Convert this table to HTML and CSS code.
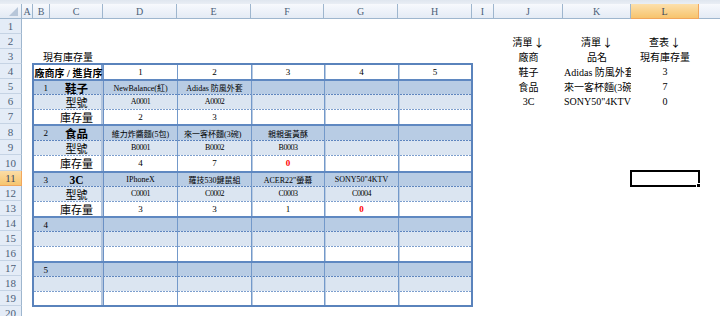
FILE: index.html
```html
<!DOCTYPE html>
<html lang="zh-Hant">
<head>
<meta charset="utf-8">
<title>現有庫存量</title>
<link rel="stylesheet" href="styles.css">
</head>
<body>
<div class="topstrip"></div>
<div class="sheet">
  <div class="corner"><svg width="9" height="9" viewBox="0 0 9 9"><polygon points="9,0 9,9 0,9" fill="#b7c6d9"/></svg></div>
  <div class="colheads">
    <div class="ch wa">A</div><div class="ch wb">B</div><div class="ch wc">C</div><div class="ch wd">D</div><div class="ch we">E</div><div class="ch wf">F</div><div class="ch wg">G</div><div class="ch wh">H</div><div class="ch wi">I</div><div class="ch wj">J</div><div class="ch wk">K</div><div class="ch wl sel">L</div><div class="ch wm"></div>
  </div>
  <div class="rowheads">
    <div class="rh">1</div><div class="rh">2</div><div class="rh">3</div><div class="rh">4</div><div class="rh">5</div><div class="rh">6</div><div class="rh">7</div><div class="rh tall">8</div><div class="rh">9</div><div class="rh tall">10</div><div class="rh sel">11</div><div class="rh">12</div><div class="rh">13</div><div class="rh">14</div><div class="rh">15</div><div class="rh">16</div><div class="rh">17</div><div class="rh">18</div><div class="rh">19</div><div class="rh">20</div>
  </div>
  <div class="body">
    <div class="title">現有庫存量</div>

    <div class="lookup">
      <div class="lk">清單<span class="arrow">↓</span></div><div class="lk">清單<span class="arrow">↓</span></div><div class="lk">查表<span class="arrow">↓</span></div>
      <div class="lk">廠商</div><div class="lk">品名</div><div class="lk">現有庫存量</div>
      <div class="lk">鞋子</div><div class="lk left">Adidas 防風外套</div><div class="lk">3</div>
      <div class="lk">食品</div><div class="lk left">來一客杯麵(3碗)</div><div class="lk">7</div>
      <div class="lk">3C</div><div class="lk left">SONY50"4KTV</div><div class="lk">0</div>
    </div>

    <div class="tbl">
      <div class="tr r4"><div class="bc">廠商序 / 進貨序</div><div class="x d num">1</div><div class="x e num">2</div><div class="x f num">3</div><div class="x g num">4</div><div class="x h num">5</div></div>

      <div class="tr g1"><div class="n">1</div><div class="lab strong">鞋子</div><div class="x d">NewBalance(紅)</div><div class="x e">Adidas 防風外套</div><div class="x f"></div><div class="x g"></div><div class="x h"></div></div>
      <div class="tr g2"><div class="n"></div><div class="lab">型號</div><div class="x d code">A0001</div><div class="x e code">A0002</div><div class="x f"></div><div class="x g"></div><div class="x h"></div></div>
      <div class="tr g3"><div class="n"></div><div class="lab">庫存量</div><div class="x d num">2</div><div class="x e num">3</div><div class="x f"></div><div class="x g"></div><div class="x h"></div></div>

      <div class="tr g1 tall"><div class="n">2</div><div class="lab strong">食品</div><div class="x d">維力炸醬麵(5包)</div><div class="x e clip">來一客杯麵(3碗)</div><div class="x f">親親蛋黃酥</div><div class="x g"></div><div class="x h"></div></div>
      <div class="tr g2"><div class="n"></div><div class="lab">型號</div><div class="x d code">B0001</div><div class="x e code">B0002</div><div class="x f code">B0003</div><div class="x g"></div><div class="x h"></div></div>
      <div class="tr g3 tall"><div class="n"></div><div class="lab">庫存量</div><div class="x d num">4</div><div class="x e num">7</div><div class="x f num zero">0</div><div class="x g"></div><div class="x h"></div></div>

      <div class="tr g1"><div class="n">3</div><div class="lab strong">3C</div><div class="x d">IPhoneX</div><div class="x e">羅技530鍵鼠組</div><div class="x f">ACER22"螢幕</div><div class="x g">SONY50"4KTV</div><div class="x h"></div></div>
      <div class="tr g2"><div class="n"></div><div class="lab">型號</div><div class="x d code">C0001</div><div class="x e code">C0002</div><div class="x f code">C0003</div><div class="x g code">C0004</div><div class="x h"></div></div>
      <div class="tr g3"><div class="n"></div><div class="lab">庫存量</div><div class="x d num">3</div><div class="x e num">3</div><div class="x f num">1</div><div class="x g num zero">0</div><div class="x h"></div></div>

      <div class="tr g1"><div class="n">4</div><div class="lab"></div><div class="x d"></div><div class="x e"></div><div class="x f"></div><div class="x g"></div><div class="x h"></div></div>
      <div class="tr g2"><div class="n"></div><div class="lab"></div><div class="x d"></div><div class="x e"></div><div class="x f"></div><div class="x g"></div><div class="x h"></div></div>
      <div class="tr g3"><div class="n"></div><div class="lab"></div><div class="x d"></div><div class="x e"></div><div class="x f"></div><div class="x g"></div><div class="x h"></div></div>

      <div class="tr g1"><div class="n">5</div><div class="lab"></div><div class="x d"></div><div class="x e"></div><div class="x f"></div><div class="x g"></div><div class="x h"></div></div>
      <div class="tr g2"><div class="n"></div><div class="lab"></div><div class="x d"></div><div class="x e"></div><div class="x f"></div><div class="x g"></div><div class="x h"></div></div>
      <div class="tr g3 last"><div class="n"></div><div class="lab"></div><div class="x d"></div><div class="x e"></div><div class="x f"></div><div class="x g"></div><div class="x h"></div></div>
    </div>

    <div class="cursor"><span class="handle"></span></div>
  </div>
</div>
</body>
</html>
```

FILE: styles.css
```css
* { box-sizing: border-box; margin: 0; padding: 0; }

html, body {
  width: 720px;
  height: 316px;
  overflow: hidden;
  background: #ffffff;
}

body {
  font-family: "Liberation Serif", "Noto Sans CJK TC", serif;
  color: #000;
}

.topstrip {
  height: 4px;
  background: linear-gradient(#dfe6ef, #e9eef5);
}

.sheet {
  display: grid;
  grid-template-columns: 22px 698px;
  grid-template-rows: 15px 297px;
}

/* corner select-all */
.corner {
  background: linear-gradient(#f6f8fc, #e3eaf4);
  border-right: 1px solid #9eb6ce;
  border-bottom: 1px solid #9eb6ce;
  display: flex;
  align-items: flex-end;
  justify-content: flex-end;
  padding: 0 3px 2px 0;
}

/* column headers */
.colheads {
  display: flex;
}
.ch {
  flex: none;
  height: 15px;
  border-right: 1px solid #9eb6ce;
  border-bottom: 1px solid #9eb6ce;
  background: linear-gradient(#f7f9fd, #e4ebf5);
  font-size: 10px;
  color: #4c5f78;
  display: flex;
  align-items: center;
  justify-content: center;
}
.ch.sel {
  background: linear-gradient(#fce0ad, #f7c46e);
  border-right-color: #f1a65c;
  border-bottom-color: #f1a65c;
  color: #3f4b5c;
}
.wa { width: 11px; }
.wb { width: 17px; }
.wc { width: 53px; }
.wd { width: 74px; }
.we { width: 74px; }
.wf { width: 73px; }
.wg { width: 74px; }
.wh { width: 74px; }
.wi { width: 22px; }
.wj { width: 69px; }
.wk { width: 68px; }
.wl { width: 68px; }
.wm { flex: 1; border-right: none; }

/* row headers */
.rowheads {
  display: flex;
  flex-direction: column;
}
.rh {
  flex: none;
  height: 15px;
  background: #e4ecf7;
  border-right: 1px solid #9eb6ce;
  border-bottom: 1px solid #c5d3e4;
  font-size: 11px;
  color: #4c5f78;
  display: flex;
  align-items: center;
  justify-content: center;
}
.rh.tall { height: 16px; }
.rh.sel {
  background: linear-gradient(#fbdca6, #f6c56f);
  border-right-color: #f1a65c;
  border-bottom-color: #f1a65c;
  color: #3f4b5c;
}

/* sheet body */
.body {
  display: grid;
  grid-template-columns: 11px 17px 53px 74px 74px 73px 74px 74px 22px 69px 68px 68px 1fr;
  grid-template-rows: repeat(7, 15px) 16px 15px 16px repeat(10, 15px);
}

.title {
  grid-row: 3;
  grid-column: 2 / 5;
  padding-left: 10px;
  font-size: 10px;
  display: flex;
  align-items: center;
  white-space: nowrap;
}

/* lookup list on the right */
.lookup {
  grid-row: 2 / 7;
  grid-column: 10 / 13;
  display: grid;
  grid-template-columns: 69px 68px 68px;
  grid-auto-rows: 15px;
  font-size: 10px;
}
.lk {
  display: flex;
  align-items: center;
  justify-content: center;
  white-space: nowrap;
  overflow: hidden;
}
.lk.left {
  justify-content: flex-start;
  padding-left: 1px;
}
.arrow {
  font-family: "Noto Sans CJK TC", sans-serif;
  font-size: 11px;
  margin-left: 1px;
}

/* main table */
.tbl {
  grid-row: 4 / 20;
  grid-column: 2 / 9;
  margin: -1px;
  border: 2px solid #5a83bc;
  display: flex;
  flex-direction: column;
}
.tr {
  flex: none;
  height: 15px;
  display: grid;
  grid-template-columns: 16px 53px 74px 74px 73px 74px 73px;
}
.tr.tall { height: 16px; }
.tr.r4 { height: 14px; background: #fff; }
.tr.last { height: 14px; }

.g1 {
  border-top: 2px solid #5f88c1;
  background: #b8cce4;
}
.g2 {
  background:
    repeating-linear-gradient(90deg, #5f86bf 0 2px, transparent 2px 3px) top left / 100% 1px no-repeat,
    #dbe5f1;
}
.g3 {
  background:
    repeating-linear-gradient(90deg, #7d9fce 0 2px, transparent 2px 3px) top left / 100% 1px no-repeat,
    #ffffff;
}

.tr > div {
  display: flex;
  align-items: center;
  justify-content: center;
  white-space: nowrap;
  overflow: hidden;
}

.bc {
  grid-column: 1 / 3;
  font-size: 10px;
  font-weight: bold;
  box-shadow: inset -2px 0 0 #7a9dcd;
}
.n {
  justify-content: flex-end !important;
  padding-right: 2px;
  font-size: 9px;
}
.lab {
  font-size: 11px;
  box-shadow: inset -2px 0 0 #b3c5dd;
}
.lab.strong { font-weight: bold; font-size: 11.5px; }

.x {
  font-size: 8px;
  border-left: 1px solid #7399ca;
}
.x.d { border-left-color: #6b91c5; }
.x.f, .x.g, .x.h { box-shadow: inset 1px 0 0 #b9cbe2; }
.x.num { font-size: 9px; }
.x.code { letter-spacing: -0.5px; }
.x.zero { color: #ff0000; font-weight: bold; }
.x.clip {
  justify-content: flex-start !important;
  padding-left: 6px;
}

/* active cell L11 */
.cursor {
  grid-row: 11;
  grid-column: 12;
  outline: 2px solid #000;
  outline-offset: -1px;
  position: relative;
}
.handle {
  position: absolute;
  right: -2px;
  bottom: -2px;
  width: 5px;
  height: 5px;
  background: #000;
  border: 1px solid #fff;
}
```
